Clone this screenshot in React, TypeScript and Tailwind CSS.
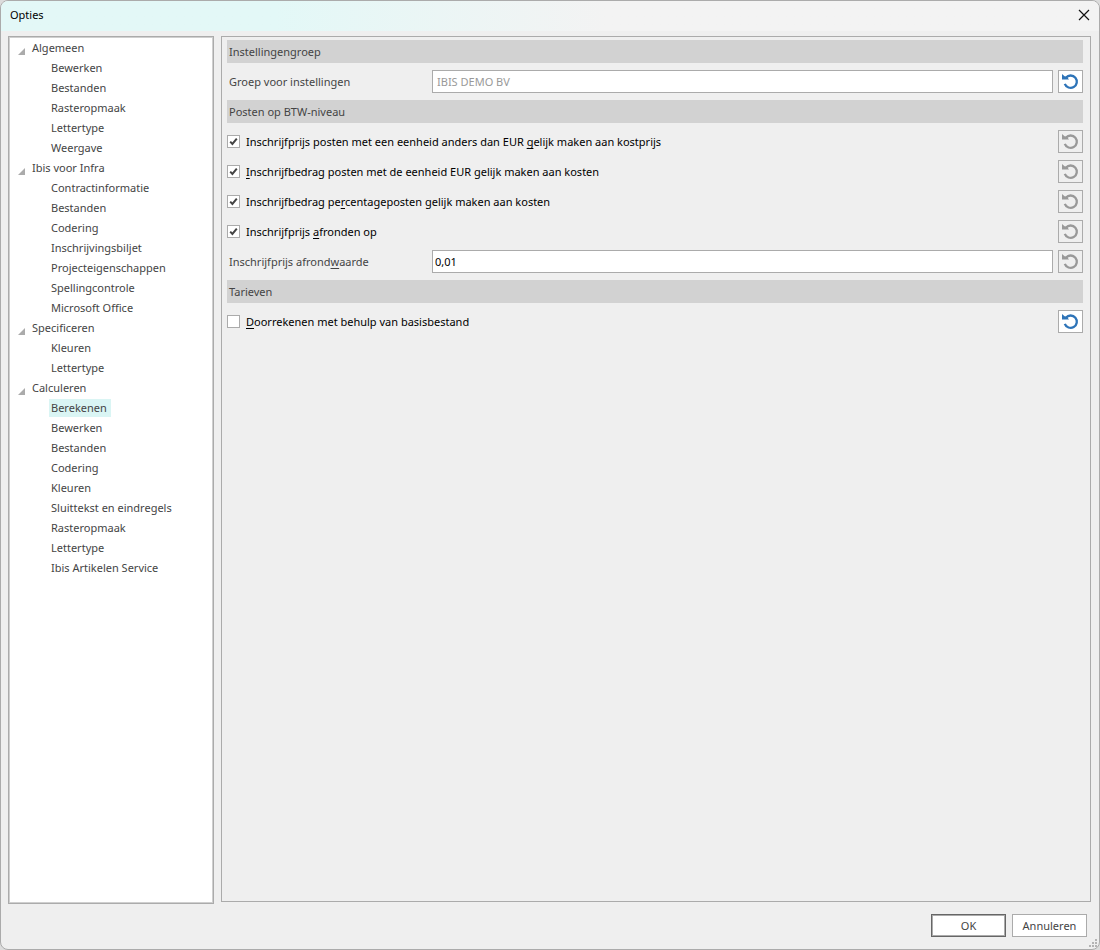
import { useState } from "react";
import type { ReactNode } from "react";

type Group = { title: string; items: string[] };

const groups: Group[] = [
  { title: "Algemeen", items: ["Bewerken", "Bestanden", "Rasteropmaak", "Lettertype", "Weergave"] },
  {
    title: "Ibis voor Infra",
    items: [
      "Contractinformatie",
      "Bestanden",
      "Codering",
      "Inschrijvingsbiljet",
      "Projecteigenschappen",
      "Spellingcontrole",
      "Microsoft Office",
    ],
  },
  { title: "Specificeren", items: ["Kleuren", "Lettertype"] },
  {
    title: "Calculeren",
    items: [
      "Berekenen",
      "Bewerken",
      "Bestanden",
      "Codering",
      "Kleuren",
      "Sluittekst en eindregels",
      "Rasteropmaak",
      "Lettertype",
      "Ibis Artikelen Service",
    ],
  },
];

function CloseIcon() {
  return (
    <svg width="12" height="12" viewBox="0 0 12 12" fill="none" aria-hidden="true">
      <path d="M1 1L11 11M11 1L1 11" stroke="#111" strokeWidth="1.2" />
    </svg>
  );
}

function ResetIcon() {
  return (
    <svg width="17" height="17" viewBox="0 0 17 17" fill="none" aria-hidden="true">
      <path d="M3.9 4.7A6.2 6.2 0 1 1 2.8 10.8" stroke="currentColor" strokeWidth="2.3" />
      <path d="M0 1L2.6 3.2L5 4L7 6.6H0Z" fill="currentColor" />
    </svg>
  );
}

function GripIcon() {
  return (
    <svg width="8" height="8" viewBox="0 0 8 8" fill="#b4b4b4" aria-hidden="true">
      <path d="M6 0h2v2H6zM3 3h2v2H3zM6 3h2v2H6zM0 6h2v2H0zM3 6h2v2H3zM6 6h2v2H6z" />
    </svg>
  );
}

// Accesskey letter
function Key({ children }: { children: string }) {
  return <span className="underline underline-offset-2 [text-decoration-skip-ink:none]">{children}</span>;
}

function ResetButton({ disabled = false }: { disabled?: boolean }) {
  return (
    <button
      type="button"
      disabled={disabled}
      aria-label="Standaardwaarde herstellen"
      className="flex h-[23px] w-[25px] shrink-0 items-center justify-center border border-[#ababab] bg-white text-[#2e74b8] disabled:bg-[#efefef] disabled:text-[#999]"
    >
      <ResetIcon />
    </button>
  );
}

function SectionTitle({ children }: { children: ReactNode }) {
  return <h2 className="h-[23px] bg-[#d2d2d2] px-0.5 leading-[23px] text-[#444]">{children}</h2>;
}

function CheckRow({ checked = false, resettable = false, children }: { checked?: boolean; resettable?: boolean; children: ReactNode }) {
  const [on, setOn] = useState(checked);
  return (
    <div className="flex items-center justify-between">
      <label className="flex items-center gap-1.5 text-black">
        <span className="grid size-[13px]">
          <input
            type="checkbox"
            checked={on}
            onChange={(e) => setOn(e.target.checked)}
            className="col-start-1 row-start-1 size-[13px] appearance-none border border-[#ababab] bg-white"
          />
          {on && (
            <svg className="pointer-events-none col-start-1 row-start-1" width="13" height="13" viewBox="0 0 13 13" fill="none" aria-hidden="true">
              <path d="M3.2 6.6L5.4 9L9.8 3.6" stroke="#444" strokeWidth="2" />
            </svg>
          )}
        </span>
        <span>{children}</span>
      </label>
      <ResetButton disabled={!resettable} />
    </div>
  );
}

function Sidebar() {
  const [selected, setSelected] = useState("Calculeren/Berekenen");
  return (
    <nav className="w-[206px] shrink-0 border border-[#ababab] bg-white">
      <div className="h-full border border-[#cfcfcf] px-2">
        {groups.map((group) => (
          <section key={group.title}>
            <h2 className="flex h-5 items-center gap-1.5">
              <svg className="mt-1.5" width="8" height="7" viewBox="0 0 8 7" fill="#ababab" aria-hidden="true">
                <path d="M7 0V7H0Z" />
              </svg>
              {group.title}
            </h2>
            <ul className="pl-[31px]">
              {group.items.map((item) => {
                const id = `${group.title}/${item}`;
                return (
                  <li key={item} className="flex h-5 items-center">
                    <button
                      type="button"
                      onClick={() => setSelected(id)}
                      className={id === selected ? "h-[18px] bg-[#daf5f4] pr-1 pl-0.5" : "h-[18px] pr-1 pl-0.5"}
                    >
                      {item}
                    </button>
                  </li>
                );
              })}
            </ul>
          </section>
        ))}
      </div>
    </nav>
  );
}

export default function App() {
  return (
    <div className="bg-[#dcdcdc]">
      <div className="flex min-h-screen flex-col overflow-hidden rounded-lg border border-[#ababab] bg-[#efefef] font-['Noto_Sans','Open_Sans',sans-serif] text-[11px] leading-[18px] text-[#444]">
        <header className="flex h-[30px] items-center justify-between bg-linear-to-r from-[#e3f8f7] from-25% to-[#f3f3f3] to-55% pr-[9px] pb-0.5 pl-[9px] text-black">
          <h1>Opties</h1>
          <button type="button" aria-label="Sluiten">
            <CloseIcon />
          </button>
        </header>

        <div className="flex grow gap-[7px] px-[7px] pt-[5px]">
          <Sidebar />
          <main className="mr-px mb-0.5 flex grow flex-col gap-[7px] border border-[#ababab] pt-[3px] pr-[7px] pl-[5px]">
            <SectionTitle>Instellingengroep</SectionTitle>
            <div className="flex items-center gap-[5px]">
              <label htmlFor="groep" className="w-[200px] shrink-0 pl-0.5">
                Groep voor instellingen
              </label>
              <input
                id="groep"
                disabled
                defaultValue="IBIS DEMO BV"
                className="h-[23px] min-w-0 grow border border-[#ababab] bg-white px-1 text-[#999]"
              />
              <ResetButton />
            </div>

            <SectionTitle>Posten op BTW-niveau</SectionTitle>
            <CheckRow checked>
              Inschrijfprijs posten met een eenheid anders dan EUR <Key>g</Key>elijk maken aan kostprijs
            </CheckRow>
            <CheckRow checked>
              <Key>I</Key>nschrijfbedrag posten met de eenheid EUR gelijk maken aan kosten
            </CheckRow>
            <CheckRow checked>
              Inschrijfbedrag pe<Key>r</Key>centageposten gelijk maken aan kosten
            </CheckRow>
            <CheckRow checked>
              Inschrijfprijs <Key>a</Key>fronden op
            </CheckRow>
            <div className="flex items-center gap-[5px]">
              <label htmlFor="afrondwaarde" className="w-[200px] shrink-0 pl-0.5">
                Inschrijfprijs afrond<Key>w</Key>aarde
              </label>
              <input
                id="afrondwaarde"
                defaultValue="0,01"
                className="h-[23px] min-w-0 grow border border-[#ababab] bg-white px-0.5 text-black"
              />
              <ResetButton disabled />
            </div>

            <SectionTitle>Tarieven</SectionTitle>
            <CheckRow resettable>
              <Key>D</Key>oorrekenen met behulp van basisbestand
            </CheckRow>
          </main>
        </div>

        <footer className="relative flex h-[45px] items-center justify-end gap-1.5 pr-3 pb-0.5">
          <button type="button" className="h-[23px] w-[75px] border border-[#666] bg-white outline-1 -outline-offset-2 outline-[#ababab]">
            OK
          </button>
          <button type="button" className="h-[23px] w-[75px] border border-[#ababab] bg-white">
            Annuleren
          </button>
          <div className="absolute right-0.5 bottom-0.5">
            <GripIcon />
          </div>
        </footer>
      </div>
    </div>
  );
}
